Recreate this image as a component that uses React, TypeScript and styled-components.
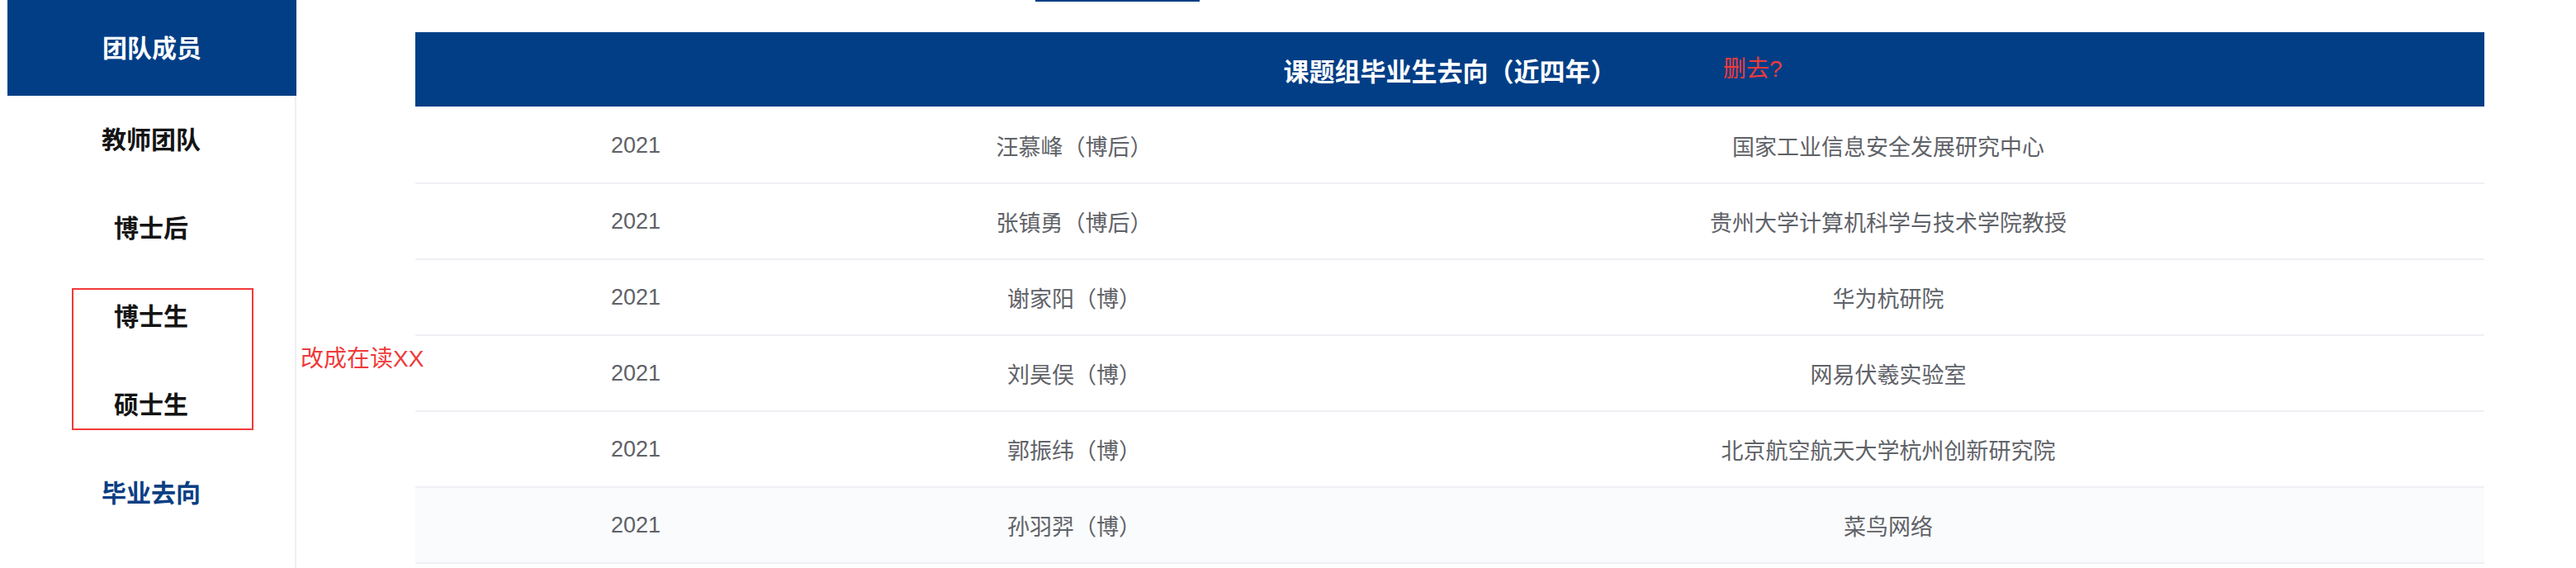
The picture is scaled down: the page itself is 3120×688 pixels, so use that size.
import React from "react";
import styled, { createGlobalStyle } from "styled-components";

const BLUE = "#013e86";
const LINE = "#eef0f4";
const RED = "#f03a3a";

const Global = createGlobalStyle`
  html, body { margin: 0; padding: 0; background: #ffffff; }
  body {
    font-family: "Liberation Sans", "Noto Sans CJK SC", sans-serif;
  }
`;

const Page = styled.div`
  display: flex;
  align-items: flex-start;
  width: 3120px;
  height: 688px;
  overflow: hidden;
  padding-left: 9px;
  box-sizing: border-box;
`;

const Sidebar = styled.aside`
  width: 350px;
  flex: none;
  display: flex;
  flex-direction: column;
  min-height: 688px;
`;

const SideHeader = styled.div`
  height: 116px;
  box-sizing: border-box;
  padding-bottom: 4px;
  background: ${BLUE};
  color: #ffffff;
  font-size: 30px;
  font-weight: 700;
  display: flex;
  align-items: center;
  justify-content: center;
`;

const Menu = styled.nav`
  flex: 1;
  display: flex;
  flex-direction: column;
  border-right: 2px solid ${LINE};
`;

const MenuItem = styled.div<{ $active?: boolean }>`
  height: 107px;
  box-sizing: border-box;
  padding-bottom: 6px;
  display: flex;
  align-items: center;
  justify-content: center;
  font-size: 30px;
  font-weight: 700;
  color: ${(p) => (p.$active ? "#0b3f84" : "#141414")};
`;

const MenuGroup = styled.div`
  position: relative;
  display: flex;
  flex-direction: column;
  &::after {
    content: "";
    position: absolute;
    top: 19px;
    bottom: 23px;
    left: 78px;
    right: 50px;
    border: 2px solid ${RED};
    pointer-events: none;
  }
`;

const Note = styled.span`
  position: absolute;
  font-size: 28px;
  line-height: 28px;
  color: ${RED};
  white-space: nowrap;
  font-weight: 400;
`;

const SideNote = styled(Note)`
  left: 355px;
  top: 91px;
`;

const HeadNote = styled(Note)`
  left: 1584px;
  top: 31px;
`;

const Main = styled.main`
  margin-left: 144px;
  width: 2506px;
  flex: none;
  display: flex;
  flex-direction: column;
`;

const TopAccent = styled.div`
  width: 199px;
  height: 2px;
  margin-left: 751px;
  margin-bottom: 37px;
  background: ${BLUE};
`;

const TableHead = styled.div`
  position: relative;
  height: 90px;
  background: ${BLUE};
  border-bottom: 2px solid ${LINE};
  display: flex;
  align-items: center;
  justify-content: center;
  color: #ffffff;
  font-size: 31px;
  font-weight: 700;
`;

const Row = styled.div<{ $shade?: boolean }>`
  display: grid;
  grid-template-columns: 534px 528px 1fr;
  height: 90px;
  border-bottom: 2px solid ${LINE};
  background: ${(p) => (p.$shade ? "#fafbfc" : "#ffffff")};
`;

const Cell = styled.div`
  display: flex;
  align-items: center;
  justify-content: center;
  font-size: 27px;
  color: #5f6268;
  white-space: nowrap;
`;

const rows = [
  { year: "2021", name: "汪慕峰（博后）", place: "国家工业信息安全发展研究中心" },
  { year: "2021", name: "张镇勇（博后）", place: "贵州大学计算机科学与技术学院教授" },
  { year: "2021", name: "谢家阳（博）", place: "华为杭研院" },
  { year: "2021", name: "刘昊俣（博）", place: "网易伏羲实验室" },
  { year: "2021", name: "郭振纬（博）", place: "北京航空航天大学杭州创新研究院" },
  { year: "2021", name: "孙羽羿（博）", place: "菜鸟网络" },
];

export default function App() {
  return (
    <>
      <Global />
      <Page>
        <Sidebar>
          <SideHeader>团队成员</SideHeader>
          <Menu>
            <MenuItem>教师团队</MenuItem>
            <MenuItem>博士后</MenuItem>
            <MenuGroup>
              <MenuItem>博士生</MenuItem>
              <MenuItem>硕士生</MenuItem>
              <SideNote>改成在读XX</SideNote>
            </MenuGroup>
            <MenuItem $active>毕业去向</MenuItem>
          </Menu>
        </Sidebar>
        <Main>
          <TopAccent />
          <TableHead>
            课题组毕业生去向（近四年）
            <HeadNote>删去?</HeadNote>
          </TableHead>
          {rows.map((r, i) => (
            <Row key={i} $shade={i === rows.length - 1}>
              <Cell>{r.year}</Cell>
              <Cell>{r.name}</Cell>
              <Cell>{r.place}</Cell>
            </Row>
          ))}
        </Main>
      </Page>
    </>
  );
}
